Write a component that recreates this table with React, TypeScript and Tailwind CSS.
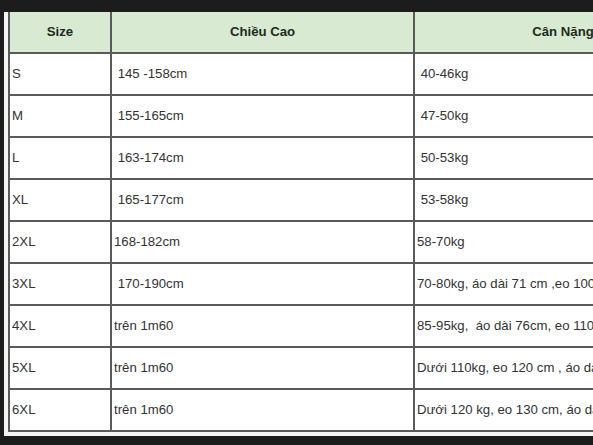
const rows: [string, string, string][] = [
  ['S', ' 145 -158cm', ' 40-46kg'],
  ['M', ' 155-165cm', ' 47-50kg'],
  ['L', ' 163-174cm', ' 50-53kg'],
  ['XL', ' 165-177cm', ' 53-58kg'],
  ['2XL', '168-182cm', '58-70kg'],
  ['3XL', ' 170-190cm', '70-80kg, áo dài 71 cm ,eo 100 cm'],
  ['4XL', 'trên 1m60', '85-95kg,  áo dài 76cm, eo 110 cm'],
  ['5XL', 'trên 1m60', 'Dưới 110kg, eo 120 cm , áo dài 78 cm'],
  ['6XL', 'trên 1m60', 'Dưới 120 kg, eo 130 cm, áo dài 80 cm'],
];

export default function App() {
  return (
    <div className="h-[445px] w-[593px] overflow-hidden bg-[#1c1c1c] pt-[12px] pl-[4px] font-['Liberation_Sans',Arial,sans-serif]">
      <div className="w-[720px] bg-[#f4f4f4] pb-[4px] pl-[4px]">
        <table className="table-fixed border-collapse bg-white text-[13.2px] text-[#333]">
          <colgroup>
            <col className="w-[102px]" />
            <col className="w-[303px]" />
            <col className="w-[298px]" />
          </colgroup>
          <thead>
            <tr className="h-[41px] bg-[#d9ead3] text-[#1e2a1e]">
              <th className="border-2 border-t-0 border-[#5a5a5a] font-bold">Size</th>
              <th className="border-2 border-t-0 border-[#5a5a5a] font-bold">Chiều Cao</th>
              <th className="border-2 border-t-0 border-[#5a5a5a] font-bold">Cân Nặng</th>
            </tr>
          </thead>
          <tbody>
            {rows.map(([size, height, weight]) => (
              <tr key={size} className="h-[42px]">
                <td className="border-2 border-[#5a5a5a] px-[2px] whitespace-pre">{size}</td>
                <td className="border-2 border-[#5a5a5a] px-[2px] whitespace-pre">{height}</td>
                <td className="border-2 border-[#5a5a5a] px-[2px] whitespace-pre">{weight}</td>
              </tr>
            ))}
          </tbody>
        </table>
      </div>
    </div>
  );
}
